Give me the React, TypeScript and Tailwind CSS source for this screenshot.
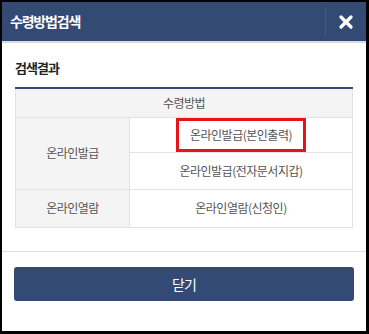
import { X } from 'lucide-react';

const font = { fontFamily: '"Noto Sans CJK KR", "Noto Sans", sans-serif' };

export default function App() {
  return (
    <div
      className="w-[369px] h-[334px] bg-white border-l-2 border-t-2 border-r-[3px] border-b-[3px] border-black flex flex-col"
      style={font}
    >
      <div className="h-[39px] bg-[#334a74] flex items-center border-b-2 border-[#dcdcdc] box-content">
        <h1 className="flex-1 pl-[8px] text-white text-[14px] font-bold tracking-[-1.2px]">수령방법검색</h1>
        <div className="w-px h-[30px] bg-[#43598a]" />
        <button className="w-[40px] h-full flex items-center justify-center text-white">
          <X size={20} strokeWidth={4} />
        </button>
      </div>

      <div className="px-[13px] pt-[15px] h-[209px] border-b border-[#dedede]">
        <h2 className="text-[13px] font-bold text-[#222] leading-[20px] tracking-[-1px]">검색결과</h2>
        <table className="mt-[9px] w-full border-collapse border-t-2 border-t-[#334a74] text-[12px] text-[#555] tracking-[-0.5px]">
          <tbody>
            <tr className="h-[29px]">
              <td colSpan={2} className="bg-[#f4f4f4] border border-[#e2e2e2] border-t-0 text-center">
                수령방법
              </td>
            </tr>
            <tr className="h-[35px]">
              <td rowSpan={2} className="w-[114px] bg-[#f4f4f4] border border-[#e2e2e2] text-center">
                온라인발급
              </td>
              <td className="border border-[#e2e2e2] p-0">
                <div className="flex justify-center h-[34px]">
                  <div className="flex items-center px-[11px] border-[3px] border-[#e5141b]">
                    온라인발급(본인출력)
                  </div>
                </div>
              </td>
            </tr>
            <tr className="h-[37px]">
              <td className="border border-[#e2e2e2] text-center">온라인발급(전자문서지갑)</td>
            </tr>
            <tr className="h-[38px]">
              <td className="bg-[#f4f4f4] border border-[#e2e2e2] text-center">온라인열람</td>
              <td className="border border-[#e2e2e2] text-center">온라인열람(신청인)</td>
            </tr>
          </tbody>
        </table>
      </div>

      <div className="px-[12px] pt-[15px]">
        <button className="w-full h-[34px] bg-[#334a74] rounded-[3px] text-white text-[14px] tracking-[-1px]">닫기</button>
      </div>
    </div>
  );
}
